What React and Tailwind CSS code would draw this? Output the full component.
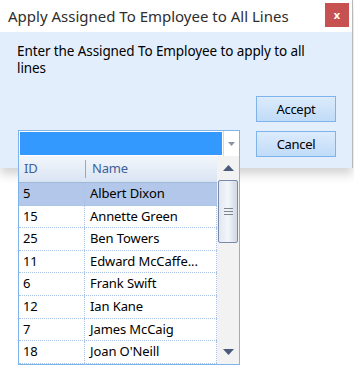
import React from "react";

const employees = [
  { id: "5", name: "Albert Dixon" },
  { id: "15", name: "Annette Green" },
  { id: "25", name: "Ben Towers" },
  { id: "11", name: "Edward McCaffe..." },
  { id: "6", name: "Frank Swift" },
  { id: "12", name: "Ian Kane" },
  { id: "7", name: "James McCaig" },
  { id: "18", name: "Joan O'Neill" },
];

const font = { fontFamily: '"Noto Sans", "Open Sans", sans-serif' };

function Triangle({ up }) {
  return (
    <svg width="11" height="6" viewBox="0 0 11 6">
      {up ? <path d="M0 6 L5.5 0 L11 6 Z" fill="#4b5a78" /> : <path d="M0 0 L5.5 6 L11 0 Z" fill="#4b5a78" />}
    </svg>
  );
}

function DialogButton({ children }) {
  return (
    <button className="w-[80px] h-[26px] border border-[#7eb4ea] bg-gradient-to-b from-[#dcebfc] to-[#c1dbf8] text-[13px] tracking-[-0.3px] text-black leading-none">
      {children}
    </button>
  );
}

function Dropdown() {
  return (
    <div className="absolute left-[-1px] top-full w-[222px] h-[209px] border border-[#7eb4ea] border-t-0 bg-white flex overflow-hidden">
      <div className="flex-1 flex flex-col">
        <div className="h-[27px] shrink-0 flex border-b border-[#9fb7d8] bg-gradient-to-b from-[#f2f6fb] to-[#d9e4f3] text-[#3f5f9a] text-[13px] tracking-[-0.2px] items-center">
          <div className="w-[66px] pl-[5px] h-full flex items-center">ID</div>
          <div className="w-[1px] h-[18px] bg-[#8ea9d2]" />
          <div className="flex-1 pl-[6px]">Name</div>
        </div>
        {employees.map((e, i) => (
          <div
            key={e.id}
            className={`h-[22.6px] shrink-0 flex text-[13px] tracking-[-0.1px] text-black border-b border-dotted border-[#a9c1e4] ${i === 0 ? "bg-[#b2c7ea]" : "bg-white"}`}
          >
            <div className="w-[66px] pl-[4px] flex items-center border-r border-dotted border-[#a9c1e4]">{e.id}</div>
            <div className="flex-1 pl-[5px] flex items-center border-r border-dotted border-[#a9c1e4]">{e.name}</div>
          </div>
        ))}
      </div>
      <div className="w-[22px] bg-[#f2f2f2] flex flex-col items-center">
        <div className="h-[24px] flex items-center justify-center">
          <Triangle up />
        </div>
        <div className="w-[20px] h-[63px] rounded-[2px] border border-[#7a8aa8] bg-gradient-to-r from-[#e2e8f0] via-[#f3f6fa] to-[#cfd8e4] flex flex-col items-center justify-center gap-[2px]">
          <div className="w-[9px] h-[1px] bg-[#7d8590]" />
          <div className="w-[9px] h-[1px] bg-[#7d8590]" />
          <div className="w-[9px] h-[1px] bg-[#7d8590]" />
        </div>
        <div className="flex-1" />
        <div className="h-[24px] flex items-center justify-center">
          <Triangle />
        </div>
      </div>
    </div>
  );
}

export default function App() {
  return (
    <div className="w-[354px] h-[369px] bg-white overflow-hidden" style={font}>
      <div className="w-[353px] border-r border-[#b9b9b9] shadow-[0_6px_10px_rgba(0,0,0,0.18)]">
        <div className="h-[32px] bg-white flex items-start justify-between">
          <div className="pl-[8px] pt-[5px] text-[15px] text-[#2e2e2e]">Apply Assigned To Employee to All Lines</div>
          <div className="mt-[3px] mr-[3px] w-[24px] h-[24px] bg-[#c75050] flex items-center justify-center text-white text-[11px] font-bold">
            x
          </div>
        </div>
        <div className="h-[136px] bg-[#e3eefc] pl-[17px] pr-[16px] pt-[11px] flex flex-col">
          <p className="text-[13.5px] leading-[17px] tracking-[-0.1px] text-black w-[292px]">
            Enter the Assigned To Employee to apply to all lines
          </p>
          <div className="flex justify-between items-end mt-[19px]">
            <div className="relative ml-[1px] w-[222px] h-[27px] border border-[#7eb4ea] bg-white flex">
              <div className="flex-1 m-[1px] bg-[#3399ff]" />
              <div className="w-[16px] border-l border-[#c5d9f0] flex items-center justify-center">
                <svg width="7" height="4" viewBox="0 0 7 4">
                  <path d="M0 0 L3.5 4 L7 0 Z" fill="#8a94a6" />
                </svg>
              </div>
              <Dropdown />
            </div>
            <div className="flex flex-col gap-[9px]">
              <DialogButton>Accept</DialogButton>
              <DialogButton>Cancel</DialogButton>
            </div>
          </div>
        </div>
      </div>
    </div>
  );
}
